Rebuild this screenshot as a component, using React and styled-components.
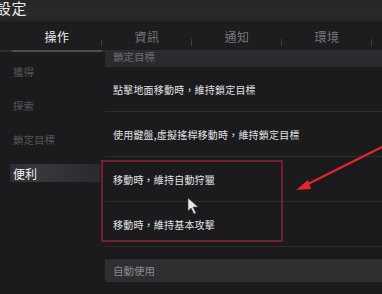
import React from "react";
import styled, { createGlobalStyle } from "styled-components";

const GlobalStyle = createGlobalStyle`
  html, body {
    margin: 0;
    padding: 0;
    background: #1b1b1e;
  }
  body {
    font-family: "Noto Sans CJK TC", "Noto Sans", sans-serif;
  }
`;

const tabs = ["操作", "資訊", "通知", "環境"];
const menu = ["獲得", "探索", "鎖定目標", "便利"];
const rows = [
  "點擊地面移動時，維持鎖定目標",
  "使用鍵盤,虛擬搖桿移動時，維持鎖定目標",
  "移動時，維持自動狩獵",
  "移動時，維持基本攻擊",
];

export default function App() {
  return (
    <>
      <GlobalStyle />
      <Screen>
        <Header>
          <Title>設定</Title>
        </Header>
        <TabBar>
          {tabs.map((t, i) => (
            <Tab key={t} active={i === 0}>
              {t}
            </Tab>
          ))}
        </TabBar>
        <Body>
          <Sidebar>
            {menu.map((m, i) => (
              <MenuItem key={m}>
                <MenuLabel active={i === menu.length - 1}>{m}</MenuLabel>
              </MenuItem>
            ))}
          </Sidebar>
          <Content>
            <List>
              <SectionHeader>鎖定目標</SectionHeader>
              {rows.map((r) => (
                <Row key={r}>{r}</Row>
              ))}
              <SectionHeader tall>自動使用</SectionHeader>
              <Row />
            </List>
          </Content>
        </Body>

        <RedBox />
        <Overlay viewBox="0 0 382 294" width="382" height="294">
          <line x1="384" y1="146" x2="306" y2="185" stroke="#e3262c" strokeWidth="2.2" strokeLinecap="round" />
          <polygon points="296,190 308,180 311,189" fill="#e3262c" />
          <path
            d="M188 198 L188 211 L191 208 L194 214 L196 213 L193 207 L198 207 Z"
            fill="#e8e8e8"
            stroke="#444"
            strokeWidth="0.6"
          />
        </Overlay>
      </Screen>
    </>
  );
}

const Screen = styled.div`
  position: relative;
  width: 382px;
  height: 294px;
  overflow: hidden;
  background: #1b1b1e;
`;

const Header = styled.div`
  height: 22px;
  display: flex;
  align-items: flex-start;
  background: linear-gradient(180deg, #262629 0%, #2a2a2d 70%, #222225 100%);
`;

const Title = styled.div`
  margin-left: -4px;
  margin-top: -2px;
  font-size: 15px;
  line-height: 20px;
  color: #ececec;
  letter-spacing: 0.5px;
`;

const TabBar = styled.div`
  display: flex;
  height: 28px;
  padding-left: 12px;
  background: #1d1d20;
  border-bottom: 2px solid #2c2c30;
`;

const Tab = styled.div`
  position: relative;
  width: 90px;
  display: flex;
  align-items: center;
  justify-content: center;
  font-size: 12px;
  letter-spacing: 0.5px;
  color: ${(p) => (p.active ? "#f0f0f0" : "#77777c")};
  border-bottom: 2px solid ${(p) => (p.active ? "#4c4c52" : "transparent")};
  margin-bottom: -2px;

  &::after {
    content: "";
    position: absolute;
    right: 0;
    top: 17px;
    width: 1px;
    height: 7px;
    background: #3c3c41;
  }
`;

const Body = styled.div`
  display: flex;
  height: 242px;
`;

const Sidebar = styled.div`
  width: 105px;
  flex-shrink: 0;
  padding-top: 2px;
  box-sizing: border-box;
`;

const MenuItem = styled.div`
  height: 34px;
  display: flex;
  align-items: center;
`;

const MenuLabel = styled.div`
  margin-left: 10px;
  width: 90px;
  height: 18px;
  padding-left: 3px;
  box-sizing: border-box;
  display: flex;
  align-items: center;
  font-size: ${(p) => (p.active ? "12px" : "10.5px")};
  color: ${(p) => (p.active ? "#f2f2f2" : "#55555a")};
  background: ${(p) =>
    p.active
      ? "linear-gradient(90deg, #2e2e32 0%, #38383c 30%, #2a2a2e 100%)"
      : "transparent"};
`;

const Content = styled.div`
  flex: 1;
  overflow: hidden;
`;

const List = styled.div`
  margin-top: -9px;
`;

const SectionHeader = styled.div`
  height: ${(p) => (p.tall ? "24px" : "24px")};
  margin-top: ${(p) => (p.tall ? "11px" : "0")};
  padding-left: 8px;
  padding-top: ${(p) => (p.tall ? "0" : "3px")};
  box-sizing: border-box;
  display: flex;
  align-items: center;
  font-size: 10.5px;
  color: ${(p) => (p.tall ? "#8a8a8f" : "#6e6e74")};
  background: ${(p) => (p.tall ? "#2f2f32" : "#2b2b2f")};
  border-top: ${(p) => (p.tall ? "1px solid #141416" : "none")};
`;

const Row = styled.div`
  height: 45px;
  box-sizing: border-box;
  padding-left: 8px;
  display: flex;
  align-items: center;
  font-size: 10px;
  letter-spacing: 0.2px;
  color: #e2e2e2;
  border-bottom: 1px solid #2c2c30;
`;

const RedBox = styled.div`
  position: absolute;
  left: 101px;
  top: 160px;
  width: 182px;
  height: 82px;
  box-sizing: border-box;
  border: 2px solid #722030;
`;

const Overlay = styled.svg`
  position: absolute;
  left: 0;
  top: 0;
  pointer-events: none;
`;
